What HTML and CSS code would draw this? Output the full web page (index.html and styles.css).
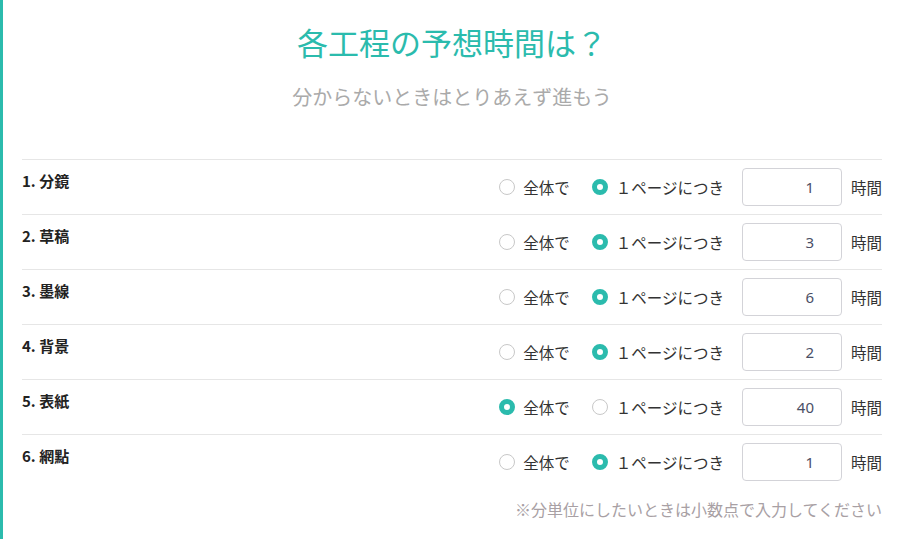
FILE: index.html
```html
<!DOCTYPE html>
<html lang="ja">

<head>
  <meta charset="UTF-8">
  <title>各工程の予想時間</title>
  <link rel="stylesheet" href="styles.css">
</head>

<body>

  <div id="page">
    <h1>各工程の予想時間は？</h1>
    <p class="lead">分からないときはとりあえず進もう</p>

    <div id="steps">
      <div class="step">
        <div class="stepName">1. 分鏡</div>
        <div class="stepInput">
          <label class="choice"><input type="radio" name="s1"><span>全体で</span></label>
          <label class="choice"><input type="radio" name="s1" checked><span>１ページにつき</span></label>
          <input type="text" class="hours" value="1">
          <span class="unit">時間</span>
        </div>
      </div>
      <div class="step">
        <div class="stepName">2. 草稿</div>
        <div class="stepInput">
          <label class="choice"><input type="radio" name="s2"><span>全体で</span></label>
          <label class="choice"><input type="radio" name="s2" checked><span>１ページにつき</span></label>
          <input type="text" class="hours" value="3">
          <span class="unit">時間</span>
        </div>
      </div>
      <div class="step">
        <div class="stepName">3. 墨線</div>
        <div class="stepInput">
          <label class="choice"><input type="radio" name="s3"><span>全体で</span></label>
          <label class="choice"><input type="radio" name="s3" checked><span>１ページにつき</span></label>
          <input type="text" class="hours" value="6">
          <span class="unit">時間</span>
        </div>
      </div>
      <div class="step">
        <div class="stepName">4. 背景</div>
        <div class="stepInput">
          <label class="choice"><input type="radio" name="s4"><span>全体で</span></label>
          <label class="choice"><input type="radio" name="s4" checked><span>１ページにつき</span></label>
          <input type="text" class="hours" value="2">
          <span class="unit">時間</span>
        </div>
      </div>
      <div class="step">
        <div class="stepName">5. 表紙</div>
        <div class="stepInput">
          <label class="choice"><input type="radio" name="s5" checked><span>全体で</span></label>
          <label class="choice"><input type="radio" name="s5"><span>１ページにつき</span></label>
          <input type="text" class="hours" value="40">
          <span class="unit">時間</span>
        </div>
      </div>
      <div class="step">
        <div class="stepName">6. 網點</div>
        <div class="stepInput">
          <label class="choice"><input type="radio" name="s6"><span>全体で</span></label>
          <label class="choice"><input type="radio" name="s6" checked><span>１ページにつき</span></label>
          <input type="text" class="hours" value="1">
          <span class="unit">時間</span>
        </div>
      </div>
    </div>

    <p class="note">※分単位にしたいときは小数点で入力してください</p>
  </div>

</body>

</html>
```

FILE: styles.css
```css
body {
  margin: 0;
  padding: 0;
  font-family: "Noto Sans CJK JP", "Noto Sans", sans-serif;
  color: #333;
  background: white;
}

#page {
  border-left: 3px solid #2bbbad;
  padding: 22px 18px 0 19px;
  min-height: 517px;
}

h1 {
  margin: 0;
  font-size: 31px;
  font-weight: normal;
  line-height: 40px;
  color: #2bbbad;
  text-align: center;
}

.lead {
  margin: 21px 0 0;
  font-size: 20px;
  line-height: 28px;
  color: #aaa;
  text-align: center;
}

#steps {
  margin-top: 48px;
}

.step {
  display: flex;
  justify-content: space-between;
  align-items: flex-start;
  border-top: 1px solid #e6e6e6;
  padding: 8px 0;
}

.stepName {
  font-size: 15px;
  font-weight: bold;
  line-height: 22px;
  padding-top: 2px;
  color: #222;
}

.stepInput {
  display: flex;
  align-items: center;
  font-size: 15.5px;
}

.choice {
  display: flex;
  align-items: center;
  gap: 8px;
  margin-right: 22px;
  cursor: pointer;
}

.choice:nth-child(2) {
  margin-right: 18px;
}

.choice input {
  appearance: none;
  margin: 0;
  width: 16px;
  height: 16px;
  border: 1px solid #c8c8c8;
  border-radius: 50%;
  background: white;
}

.choice input:checked {
  border: 5px solid #2bbbad;
}

.hours {
  box-sizing: border-box;
  width: 100px;
  height: 38px;
  padding: 0 27px 0 10px;
  border: 1px solid #d3d3d8;
  border-radius: 4px;
  font-family: "Noto Sans", sans-serif;
  font-size: 15px;
  color: #4a4f66;
  text-align: right;
}

.unit {
  margin-left: 9px;
}

.note {
  margin: 9px 0 0;
  font-size: 16px;
  line-height: 22px;
  color: #a8a0a4;
  text-align: right;
}
```
